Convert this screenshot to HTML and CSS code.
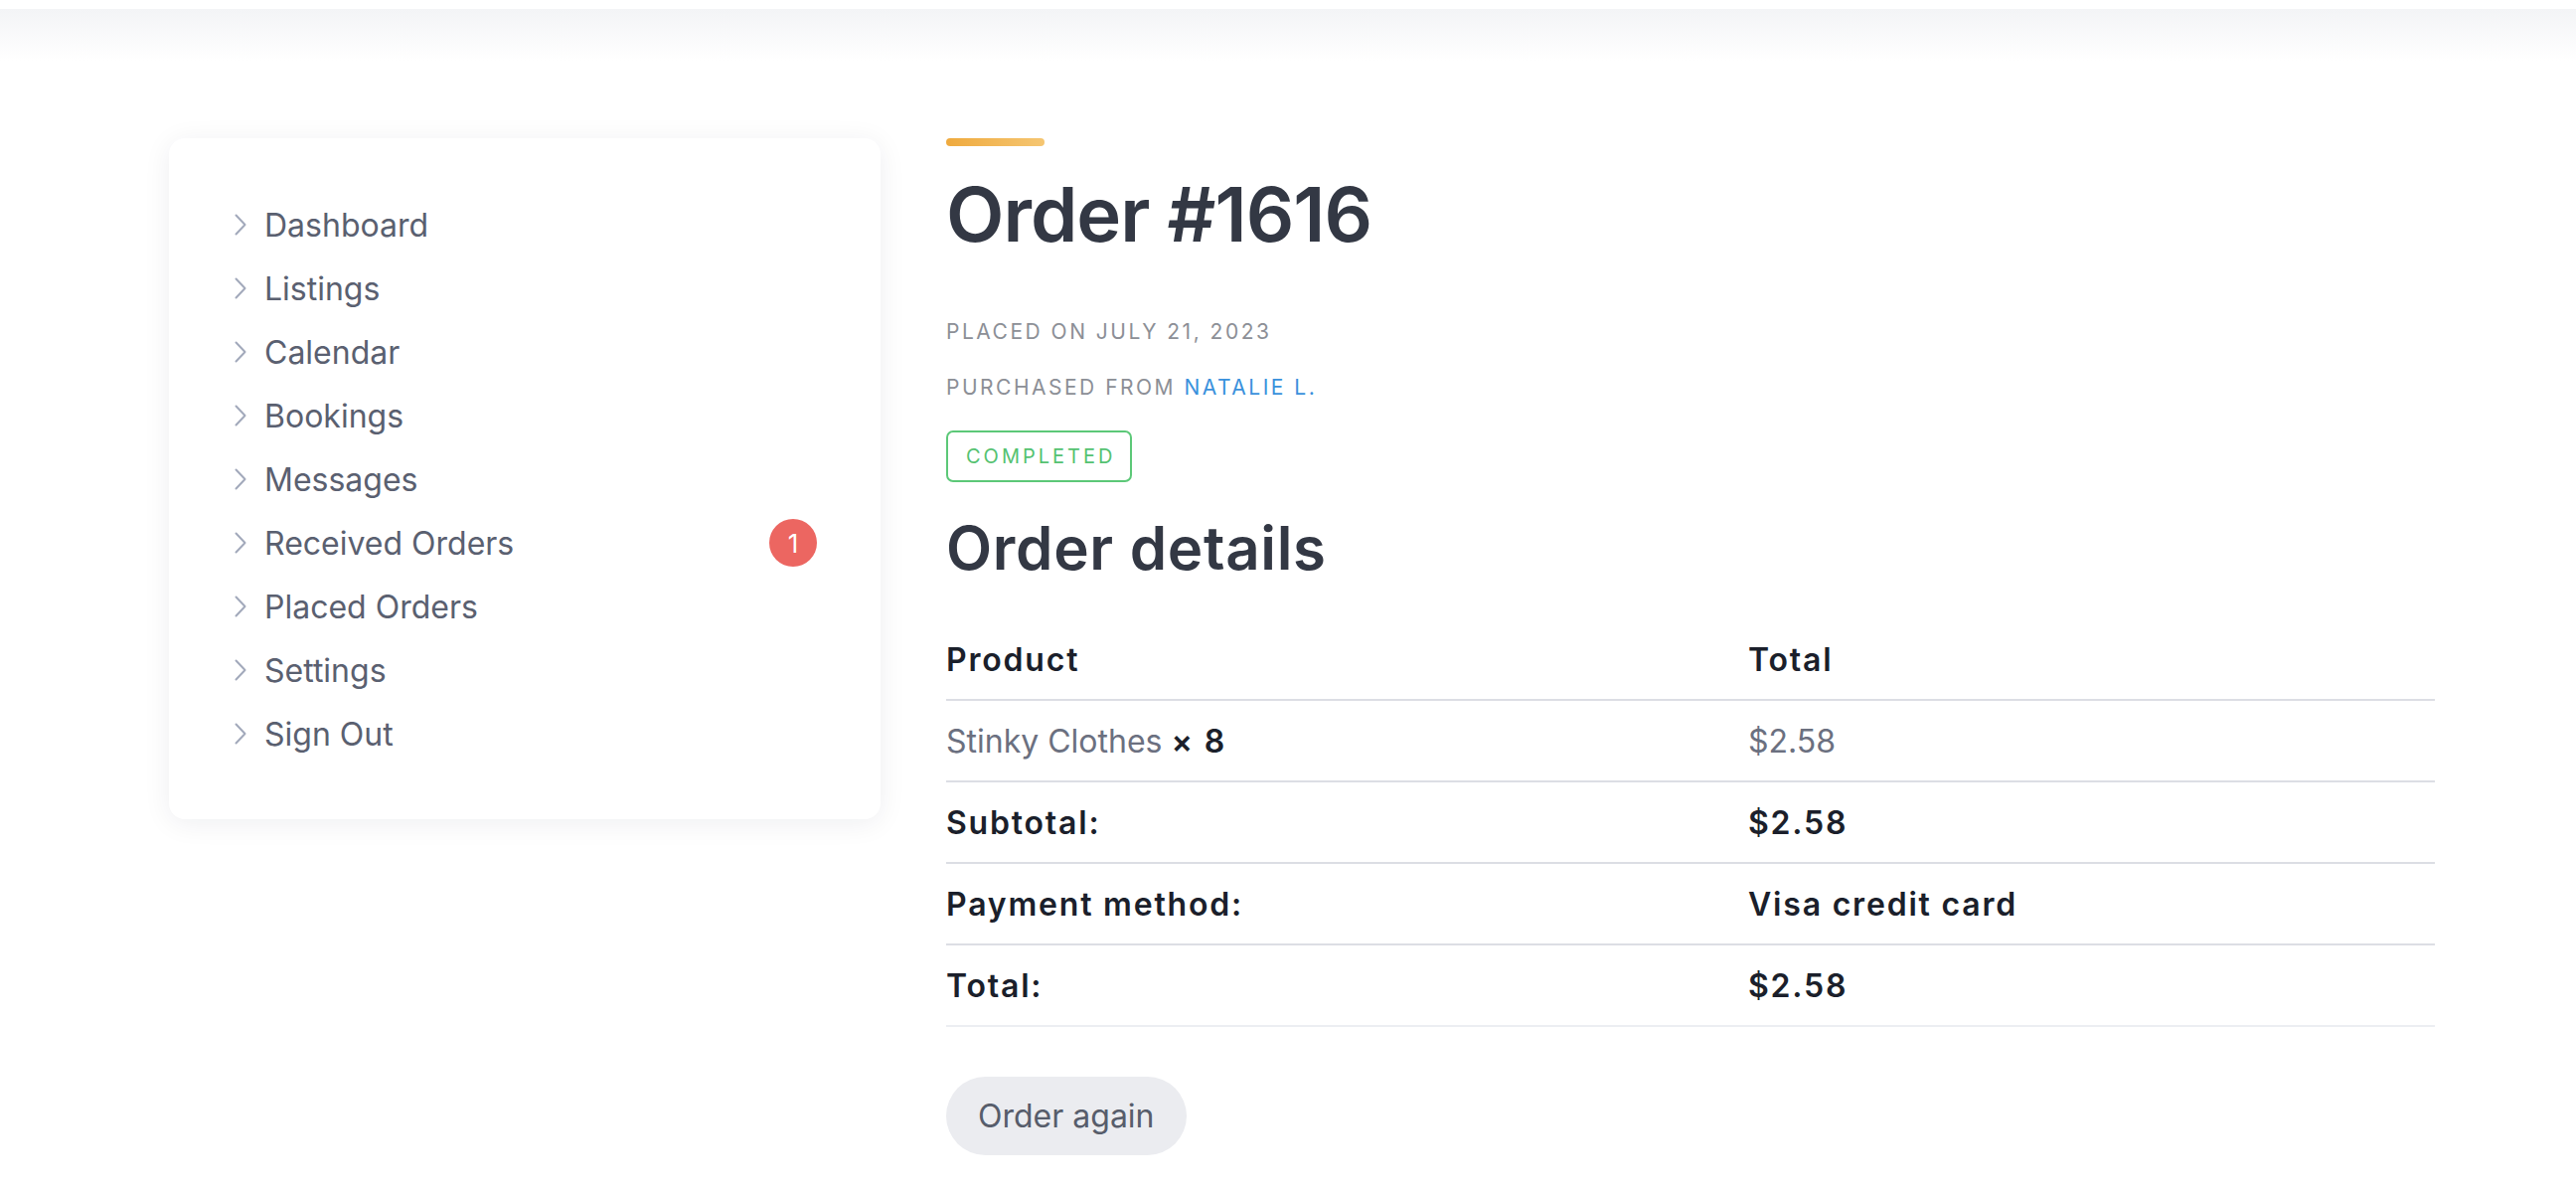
FILE: index.html
```html
<!DOCTYPE html>
<html lang="en">
<head>
<meta charset="utf-8">
<title>Order #1616</title>
<link rel="stylesheet" href="styles.css">
</head>
<body>
<div class="topbar"></div>
<div class="topshade"></div>
<div class="page">
  <aside class="card">
    <nav class="nav">
      <a class="nav-item" href="#"><svg class="chev" viewBox="0 0 12 22"><polyline points="1.5,1.5 10.5,11 1.5,20.5"/></svg><span>Dashboard</span></a>
      <a class="nav-item" href="#"><svg class="chev" viewBox="0 0 12 22"><polyline points="1.5,1.5 10.5,11 1.5,20.5"/></svg><span>Listings</span></a>
      <a class="nav-item" href="#"><svg class="chev" viewBox="0 0 12 22"><polyline points="1.5,1.5 10.5,11 1.5,20.5"/></svg><span>Calendar</span></a>
      <a class="nav-item" href="#"><svg class="chev" viewBox="0 0 12 22"><polyline points="1.5,1.5 10.5,11 1.5,20.5"/></svg><span>Bookings</span></a>
      <a class="nav-item" href="#"><svg class="chev" viewBox="0 0 12 22"><polyline points="1.5,1.5 10.5,11 1.5,20.5"/></svg><span>Messages</span></a>
      <a class="nav-item" href="#"><svg class="chev" viewBox="0 0 12 22"><polyline points="1.5,1.5 10.5,11 1.5,20.5"/></svg><span>Received Orders</span><span class="count">1</span></a>
      <a class="nav-item" href="#"><svg class="chev" viewBox="0 0 12 22"><polyline points="1.5,1.5 10.5,11 1.5,20.5"/></svg><span>Placed Orders</span></a>
      <a class="nav-item" href="#"><svg class="chev" viewBox="0 0 12 22"><polyline points="1.5,1.5 10.5,11 1.5,20.5"/></svg><span>Settings</span></a>
      <a class="nav-item" href="#"><svg class="chev" viewBox="0 0 12 22"><polyline points="1.5,1.5 10.5,11 1.5,20.5"/></svg><span>Sign Out</span></a>
    </nav>
  </aside>
  <main class="main">
    <div class="accent"></div>
    <h1 class="title">Order #1616</h1>
    <p class="meta meta-first">Placed on July 21, 2023</p>
    <p class="meta meta-second">Purchased from <a class="seller" href="#">Natalie L.</a></p>
    <span class="status">Completed</span>
    <h2 class="subtitle">Order details</h2>
    <div class="table">
      <div class="row head"><div>Product</div><div>Total</div></div>
      <div class="row"><div class="muted">Stinky Clothes <strong class="qty">× 8</strong></div><div class="muted">$2.58</div></div>
      <div class="row strong"><div>Subtotal:</div><div>$2.58</div></div>
      <div class="row strong"><div>Payment method:</div><div>Visa credit card</div></div>
      <div class="row strong last"><div>Total:</div><div>$2.58</div></div>
    </div>
    <button class="again" type="button">Order again</button>
  </main>
</div>
</body>
</html>
```

FILE: styles.css
```css
html, body {
  margin: 0;
  padding: 0;
  background: #ffffff;
}
body {
  font-family: Inter, "Liberation Sans", sans-serif;
  color: #333844;
}
.topbar {
  height: 9px;
  background: #ffffff;
}
.topshade {
  height: 52px;
  background: linear-gradient(#f3f4f6, #ffffff);
}
.page {
  display: flex;
  align-items: flex-start;
  gap: 66px;
  padding: 78px 0 0 170px;
}
.card {
  width: 716px;
  box-sizing: border-box;
  padding: 55px 64px 54px 66px;
  background: #ffffff;
  border-radius: 16px;
  box-shadow: 0 4px 28px rgba(20, 30, 60, 0.07);
}
.nav {
  display: flex;
  flex-direction: column;
}
.nav-item {
  display: flex;
  align-items: center;
  height: 64px;
  gap: 18px;
  font-size: 32px;
  color: #5a6070;
  text-decoration: none;
}
.chev {
  width: 12px;
  height: 22px;
  flex: none;
}
.chev polyline {
  fill: none;
  stroke: #a2a9bb;
  stroke-width: 2;
  stroke-linecap: round;
  stroke-linejoin: round;
}
.count {
  margin-left: auto;
  width: 48px;
  height: 48px;
  border-radius: 50%;
  background: #ec6661;
  color: #ffffff;
  font-size: 26px;
  display: flex;
  align-items: center;
  justify-content: center;
}
.main {
  width: 1498px;
  display: flex;
  flex-direction: column;
  align-items: flex-start;
}
.accent {
  width: 99px;
  height: 8px;
  border-radius: 4px;
  background: linear-gradient(90deg, #efaa3e, #f5c672);
}
.title {
  margin: 30px 0 0;
  font-size: 76px;
  line-height: 76px;
  font-weight: 600;
  letter-spacing: -1px;
  color: #333844;
}
.meta {
  margin: 0;
  font-size: 21px;
  line-height: 30px;
  letter-spacing: 2.5px;
  text-transform: uppercase;
  color: #8c8f96;
}
.meta-first {
  margin-top: 66px;
}
.meta-second {
  margin-top: 26px;
}
.seller {
  color: #3a91dc;
  text-decoration: none;
}
.status {
  margin-top: 28px;
  box-sizing: border-box;
  height: 52px;
  padding: 0 15px 0 18px;
  border: 2px solid #5cc878;
  border-radius: 7px;
  display: inline-flex;
  align-items: center;
  font-size: 20px;
  letter-spacing: 3px;
  text-transform: uppercase;
  color: #55c271;
}
.subtitle {
  margin: 36px 0 0;
  font-size: 60px;
  line-height: 60px;
  font-weight: 600;
  letter-spacing: 0.7px;
  color: #333844;
}
.table {
  margin-top: 42px;
  width: 100%;
}
.row {
  display: grid;
  grid-template-columns: 807px 1fr;
  align-items: center;
  height: 80px;
  border-bottom: 2px solid #dcdee4;
  font-size: 32px;
  font-weight: 600;
  letter-spacing: 1.8px;
  color: #1b1f2b;
}
.row.last {
  border-bottom-color: #eceef2;
}
.muted {
  font-weight: 400;
  color: #6b7080;
  letter-spacing: 0;
}
.qty {
  font-weight: 600;
  color: #1b1f2b;
  letter-spacing: 1.8px;
}
.again {
  margin-top: 50px;
  height: 79px;
  padding: 0 32px;
  border: none;
  border-radius: 40px;
  background: #ebecf0;
  font-family: Inter, "Liberation Sans", sans-serif;
  font-size: 32px;
  color: #575d6b;
  cursor: pointer;
}
```
